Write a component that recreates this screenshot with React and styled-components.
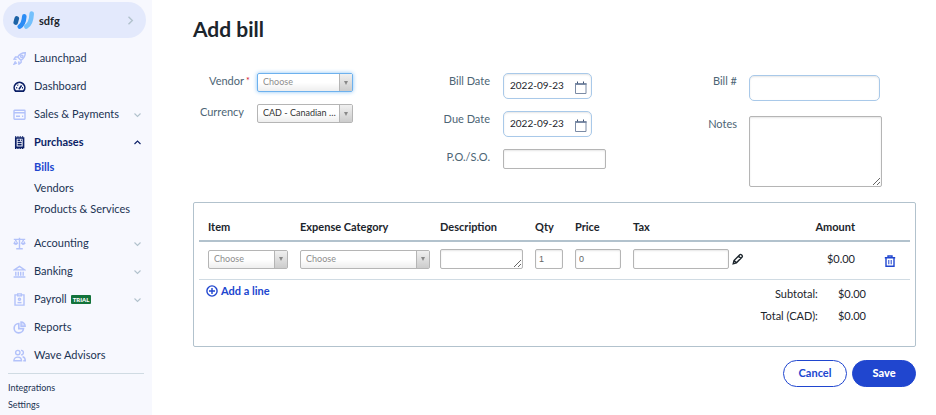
/*
Add bill page: side navigation, bill details form and line items.
*/

import React, { useState } from "react";
import styled, { createGlobalStyle, css, ThemeProvider } from "styled-components";

const theme = {
  colors: {
    blue: "#2046cf",
    navy: "#0b1f66",
    nav: "#1b3353",
    text: "#1c252c",
    label: "#4d6575",
    line: "#b2c2cd",
    icon: "#b3c2fa",
    sidebar: "#f7f8fe",
    pill: "#e3e9fc",
  },
};

const GlobalStyle = createGlobalStyle`
  *,
  *:before,
  *:after {
    box-sizing: border-box;
  }

  body {
    margin: 0;
    background-color: white;
    color: #1c252c;
    font-family: Lato, "Liberation Sans", sans-serif;
    font-size: 11px;
    line-height: 14px;
  }

  button,
  input,
  select,
  textarea {
    font-family: inherit;
    font-size: inherit;
  }
`;

const StyledPage = styled.div`
  display: flex;
  min-height: 100vh;
`;

/* Sidebar */
const StyledSidebar = styled.aside`
  flex: 0 0 152px;
  height: 100vh;
  overflow: hidden;
  padding: 2px 6px 0 3px;
  background-color: ${({ theme }) => theme.colors.sidebar};
`;

const StyledBusiness = styled.button`
  display: flex;
  align-items: center;
  gap: 4px;
  width: 100%;
  height: 36px;
  margin-bottom: 6px;
  padding: 0 12px 0 10px;
  border: none;
  border-radius: 18px;
  background-color: ${({ theme }) => theme.colors.pill};
  color: ${({ theme }) => theme.colors.text};
  font-weight: 700;
  text-align: left;
  cursor: pointer;

  span {
    flex: 1;
  }
`;

const StyledNavList = styled.ul`
  margin: 0;
  padding: 0;
  list-style: none;
`;

const StyledNavLink = styled.a`
  display: flex;
  align-items: center;
  height: 28px;
  padding: 0 4px 0 10px;
  color: ${({ theme, $active }) => ($active ? theme.colors.navy : theme.colors.nav)};
  font-weight: ${({ $active }) => ($active ? 700 : 400)};
  text-decoration: none;

  > svg:first-child {
    margin-right: 8px;
  }

  > svg:last-child:not(:first-child) {
    margin-left: auto;
  }
`;

const StyledSubList = styled.ul`
  margin: 0 0 10px;
  padding: 0 0 0 31px;
  list-style: none;
`;

const StyledSubLink = styled.a`
  display: block;
  height: 21px;
  line-height: 21px;
  color: ${({ theme, $active }) => ($active ? theme.colors.blue : theme.colors.nav)};
  font-weight: ${({ $active }) => ($active ? 700 : 400)};
  text-decoration: none;
  white-space: nowrap;
`;

const StyledBadge = styled.span`
  margin-left: 4px;
  padding: 0 2px;
  border-radius: 1px;
  background-color: #13733b;
  color: white;
  font-size: 6px;
  font-weight: 900;
  line-height: 9px;
`;

const StyledFooterNav = styled.nav`
  display: flex;
  flex-direction: column;
  gap: 3px;
  margin: 4px 2px 0 5px;
  padding-top: 7px;
  border-top: 1px solid #d0dbe3;
  font-size: 9px;

  a {
    color: ${({ theme }) => theme.colors.nav};
    text-decoration: none;
  }
`;

/* Form */
const StyledMain = styled.main`
  flex: 1;
  min-width: 0;
  padding: 15px 20px 0 41px;
`;

const StyledTitle = styled.h1`
  margin: 0 0 30px;
  font-size: 21px;
  font-weight: 700;
  line-height: 28px;
`;

const StyledFields = styled.div`
  display: grid;
  grid-template-columns: repeat(3, minmax(0, 1fr));
  gap: 15px;
`;

const StyledFieldColumn = styled.div`
  display: flex;
  flex-direction: column;
  gap: ${({ $gap }) => $gap}px;
`;

const StyledField = styled.div`
  display: grid;
  grid-template-columns: ${({ $labelWidth }) => $labelWidth || 51}px 1fr;
  column-gap: ${({ $labelWidth }) => 64 - ($labelWidth || 51)}px;
  align-items: start;
`;

const StyledLabel = styled.label`
  justify-self: end;
  position: relative;
  color: ${({ theme }) => theme.colors.label};
  line-height: 15px;
  white-space: nowrap;
`;

const StyledRequired = styled.span`
  position: absolute;
  left: 100%;
  top: 0;
  padding-left: 2px;
  color: #d40f2b;
  font-size: 9px;
`;

const controlStyle = css`
  display: block;
  border: 1px solid #b5b5b5;
  border-radius: 2px;
  background-color: white;
  color: ${({ theme }) => theme.colors.text};
  box-shadow: inset 0 1px 2px rgba(0, 0, 0, 0.1);
  outline: none;
`;

const StyledInput = styled.input`
  ${controlStyle}
  width: ${({ $width }) => $width}px;
  max-width: 100%;
  height: 20px;
  padding: 0 3px;

  ${({ $large }) =>
    $large &&
    css`
      height: 26px;
      margin-top: 2px;
      padding: 0 6px;
      border-color: #a9c9e9;
      border-radius: 5px;
    `}

  ${({ $number }) =>
    $number &&
    css`
      color: #666;
      font-family: "Liberation Sans", sans-serif;
      font-size: 9px;
    `}
`;

const StyledTextarea = styled.textarea`
  ${controlStyle}
  width: ${({ $width }) => $width}px;
  height: ${({ $height }) => $height}px;
  padding: 2px 3px;
  resize: both;
`;

const StyledDateBox = styled.div`
  ${controlStyle}
  display: flex;
  align-items: center;
  width: 89px;
  height: 26px;
  padding: 0 4px 0 6px;
  border-color: #a9c9e9;
  border-radius: 5px;

  input {
    flex: 1;
    min-width: 0;
    padding: 0 0 2px;
    border: none;
    background: none;
    color: inherit;
    font-size: 10px;
    outline: none;
  }

  button {
    display: flex;
    padding: 2px 0 0;
    border: none;
    background: none;
    cursor: pointer;
  }
`;

const StyledSelectBox = styled.div`
  position: relative;
  width: ${({ $width }) => $width}px;
  height: 19px;
  border: 1px solid ${({ $focus }) => ($focus ? "#6db1ee" : "#b5b5b5")};
  border-radius: 2px;
  background: linear-gradient(white 50%, #eee);
  box-shadow: ${({ $focus }) => ($focus ? "0 0 4px #8cc4f5" : "none")};

  select {
    display: block;
    width: 100%;
    height: 100%;
    padding: 0 14px 2px 5px;
    border: none;
    background: none;
    color: ${({ $empty }) => ($empty ? "#8d8d8d" : "#333")};
    font-size: 9px;
    appearance: none;
    outline: none;
    text-overflow: ellipsis;
  }
`;

const StyledSelectArrow = styled.span`
  position: absolute;
  top: 0;
  right: 0;
  display: flex;
  align-items: center;
  justify-content: center;
  width: 13px;
  height: 100%;
  border-left: 1px solid #b5b5b5;
  background: linear-gradient(#f0f0f0, #ccc);
  pointer-events: none;

  &:before {
    content: "";
    border: 2px solid transparent;
    border-top: 4px solid #888;
    border-bottom: none;
  }
`;

/* Line items */
const StyledCard = styled.section`
  margin-top: 15px;
  padding: 12px 5px 19px;
  border: 1px solid ${({ theme }) => theme.colors.line};
  border-radius: 2px;
`;

const StyledTable = styled.table`
  width: 100%;
  table-layout: fixed;
  border-collapse: collapse;
  border-bottom: 1px solid #d0dbe3;

  th {
    height: 26px;
    padding: 0 0 1px;
    border-bottom: 2px solid ${({ theme }) => theme.colors.line};
    text-align: left;
    white-space: nowrap;
  }

  td {
    height: 38px;
    padding: 0 0 2px;
    vertical-align: middle;
  }

  th:first-child,
  td:first-child {
    padding-left: 9px;
  }

  th.amount,
  td.amount {
    text-align: right;
  }
`;

const StyledTaxCell = styled.div`
  display: flex;
  align-items: center;
  gap: 3px;
`;

const StyledIconButton = styled.button`
  display: flex;
  padding: 0;
  border: none;
  background: none;
  color: ${({ theme, $blue }) => ($blue ? theme.colors.blue : theme.colors.text)};
  cursor: pointer;
`;

const StyledRowDelete = styled.div`
  display: flex;
  justify-content: flex-end;
  padding: 4px 14px 0 0;
`;

const StyledCardFooter = styled.div`
  display: flex;
  justify-content: space-between;
  align-items: flex-start;
  padding: 3px 44px 0 7px;
`;

const StyledAddLine = styled.button`
  display: flex;
  align-items: center;
  gap: 3px;
  height: 16px;
  padding: 0;
  border: none;
  background: none;
  color: ${({ theme }) => theme.colors.blue};
  font-weight: 700;
  cursor: pointer;
`;

const StyledTotals = styled.dl`
  display: grid;
  grid-template-columns: auto auto;
  gap: 0 20px;
  margin: 0;
  line-height: 22px;
  text-align: right;

  dd {
    margin: 0;
  }
`;

const StyledActions = styled.div`
  display: flex;
  justify-content: flex-end;
  gap: 5px;
  margin-top: 13px;
`;

const StyledButton = styled.button`
  width: 64px;
  height: 27px;
  padding: 0 0 2px;
  border: 1px solid ${({ theme }) => theme.colors.blue};
  border-radius: 14px;
  background-color: ${({ theme, $primary }) => ($primary ? theme.colors.blue : "white")};
  color: ${({ theme, $primary }) => ($primary ? "white" : theme.colors.blue)};
  font-weight: ${({ $primary }) => ($primary ? 900 : 700)};
  cursor: pointer;
`;

/* Icons */
const StyledIcon = styled.svg`
  flex: none;
  width: ${({ $size }) => $size || 13}px;
  height: ${({ $size }) => $size || 13}px;
  fill: none;
  stroke: currentColor;
  stroke-width: 1.4;
  color: ${({ theme, $tone }) => theme.colors[$tone] || "inherit"};
`;

const iconPaths = {
  launchpad: (
    <>
      <path d="M12.300.8C9 .7 6.600 2 4.700 5L8 8.300C11 6.500 12.300 4 12.300.8zM5 4.800 2.500 5 1 7.200l2.600.2M8.200 8l-.1 2.500L6 12.100l-.3-2.700M2.500 9.200 1 12.200l3-1.300" />
      <circle cx="8.800" cy="4.300" r="1.200" />
    </>
  ),
  dashboard: (
    <>
      <path strokeWidth="1.700" d="M2.600 11.200A5.300 5.300 0 1 1 10.400 11.200z" />
      <path strokeWidth="1.600" d="M5.900 9.400 8.600 5.400" />
      <path d="M3.200 7.800h1M4.500 4.800l.6.6M9 7.800h1" />
    </>
  ),
  sales: (
    <>
      <rect x="1" y="2.200" width="11" height="9" rx=".6" />
      <path d="M1 4.800h11M3 8.300h4M9 8.300h1.200" />
    </>
  ),
  purchases: (
    <>
      <path strokeWidth="1.700" d="M2.800 2v9.300h7.700V2z" />
      <path strokeWidth="1.400" strokeDasharray="1.300 1" d="M2 .9h9.200M2 12.200h9.200" />
      <path d="M4.600 4.200h2.600M4.600 6.500h4M4.600 8.800h4M8 4.200h.8" />
    </>
  ),
  accounting: (
    <>
      <path d="M.8 2.400h11.400M6.500.8v10.700M3.200 11.700h6.600" />
      <path fill="currentColor" strokeWidth=".8" d="M.8 6h4c-.2 2-3.800 2-4 0zM8.200 6h4c-.2 2-3.800 2-4 0z" />
      <path strokeWidth="1" d="M1.200 6 2.800 3l1.600 3M8.600 6l1.600-3 1.600 3" />
    </>
  ),
  banking: (
    <path d="M1.300 4.900 6.500 1.400l5.200 3.500zM.6 12h11.800M2.800 6.700v4M5.300 6.700v4M7.700 6.700v4M10.200 6.700v4" />
  ),
  payroll: (
    <>
      <path d="M4.500 1.900H2v10.200h9V1.900H8.500M4.700.9h3.600v2H4.700z" />
      <circle cx="6.500" cy="6.200" r="1.100" />
      <path d="M4.500 9.600h4" />
    </>
  ),
  reports: (
    <>
      <path strokeWidth="1.600" d="M5.800 2.500A4.700 4.700 0 1 0 10.500 7.600H5.800z" />
      <path fill="currentColor" fillOpacity=".5" d="M8 1V5.200h4.200A4.200 4.200 0 0 0 8 1z" />
    </>
  ),
  advisors: (
    <>
      <circle cx="4.800" cy="3.600" r="2.200" />
      <path d="M.9 11.800c0-4.900 7.600-4.900 7.600 0zM8 1.400c3.200-.4 3.200 4.800 0 4.500M9.600 7.800c1.800.4 2.700 2 2.700 4h-2" />
    </>
  ),
};

const NavIcon = ({ name, dark }) => (
  <StyledIcon viewBox="0 0 13 13" $tone={dark ? "navy" : "icon"} aria-hidden="true">
    {iconPaths[name]}
  </StyledIcon>
);

const Chevron = ({ up }) => (
  <StyledIcon viewBox="0 0 9 9" $size={9} $tone={up ? "navy" : "line"} aria-hidden="true">
    <path strokeWidth="1.100" d={up ? "M1.500 6 4.500 3l3 3" : "M1.500 3.500l3 3 3-3"} />
  </StyledIcon>
);

const Logo = () => (
  <svg width="22" height="20" viewBox="0 0 22 20" fill="none" strokeLinecap="round" aria-hidden="true">
    <path d="M3.800 8.400 2.700 12.600" stroke="#1c62a5" strokeWidth="4.600" />
    <path d="M18.700 3.600C18.400 9.500 17 14.500 13.300 16.600" stroke="#73c0fc" strokeWidth="4.600" />
    <path d="M11.300 6.400C11 11 9.800 14.600 6.700 16.600" stroke="#2b8cf5" strokeWidth="4.600" />
  </svg>
);

const topItems = [
  { name: "Launchpad", icon: "launchpad" },
  { name: "Dashboard", icon: "dashboard", dark: true },
  { name: "Sales & Payments", icon: "sales", expands: true },
  { name: "Purchases", icon: "purchases", dark: true, expands: true, open: true },
];

const bottomItems = [
  { name: "Accounting", icon: "accounting", expands: true },
  { name: "Banking", icon: "banking", expands: true },
  { name: "Payroll", icon: "payroll", expands: true, badge: "TRIAL" },
  { name: "Reports", icon: "reports" },
  { name: "Wave Advisors", icon: "advisors" },
];

const NavItem = ({ item }) => (
  <li>
    <StyledNavLink href="#" $active={item.open}>
      <NavIcon name={item.icon} dark={item.dark} />
      {item.name}
      {item.badge && <StyledBadge>{item.badge}</StyledBadge>}
      {item.expands && <Chevron up={item.open} />}
    </StyledNavLink>
  </li>
);

const Sidebar = () => (
  <StyledSidebar>
    <StyledBusiness type="button">
      <Logo />
      <span>sdfg</span>
      <StyledIcon viewBox="0 0 9 9" $size={9} $tone="line" aria-hidden="true">
        <path d="M3.500.8 7.300 4.500 3.500 8.200" />
      </StyledIcon>
    </StyledBusiness>
    <nav>
      <StyledNavList>
        {topItems.map((item) => (
          <NavItem key={item.name} item={item} />
        ))}
      </StyledNavList>
      <StyledSubList>
        {["Bills", "Vendors", "Products & Services"].map((name) => (
          <li key={name}>
            <StyledSubLink href="#" $active={name === "Bills"}>
              {name}
            </StyledSubLink>
          </li>
        ))}
      </StyledSubList>
      <StyledNavList>
        {bottomItems.map((item) => (
          <NavItem key={item.name} item={item} />
        ))}
      </StyledNavList>
    </nav>
    <StyledFooterNav>
      <a href="#">Integrations</a>
      <a href="#">Settings</a>
    </StyledFooterNav>
  </StyledSidebar>
);

const Select = ({ id, label, options, width, focus, empty }) => (
  <StyledSelectBox $width={width} $focus={focus} $empty={empty}>
    <select id={id} aria-label={label}>
      {options.map((option) => (
        <option key={option}>{option}</option>
      ))}
    </select>
    <StyledSelectArrow />
  </StyledSelectBox>
);

const DateField = ({ id, label }) => {
  const [date, setDate] = useState("2022-09-23");

  return (
    <StyledField>
      <StyledLabel htmlFor={id}>{label}</StyledLabel>
      <StyledDateBox>
        <input id={id} type="text" value={date} onChange={(e) => setDate(e.target.value)} />
        <button type="button" aria-label={`Pick ${label}`}>
          <svg width="13" height="13" viewBox="0 0 13 13" fill="none" stroke="#7b8ba5" aria-hidden="true">
            <path d="M1.500 2.500h10.500v10H1.500z" />
            <path strokeWidth="2" d="M1 3h11.500" />
            <path stroke="#3f5273" d="M3.500.5v2M9.500.5v2" />
          </svg>
        </button>
      </StyledDateBox>
    </StyledField>
  );
};

const LineItems = () => (
  <StyledCard>
    <StyledTable>
      <colgroup>
        <col style={{ width: 101 }} />
        <col style={{ width: 140 }} />
        <col style={{ width: 95 }} />
        <col style={{ width: 40 }} />
        <col style={{ width: 58 }} />
        <col style={{ width: 120 }} />
        <col />
        <col style={{ width: 55 }} />
      </colgroup>
      <thead>
        <tr>
          <th>Item</th>
          <th>Expense Category</th>
          <th>Description</th>
          <th>Qty</th>
          <th>Price</th>
          <th>Tax</th>
          <th className="amount">Amount</th>
          <th aria-label="Actions" />
        </tr>
      </thead>
      <tbody>
        <tr>
          <td>
            <Select label="Item" options={["Choose"]} width={80} empty />
          </td>
          <td>
            <Select label="Expense Category" options={["Choose"]} width={130} empty />
          </td>
          <td>
            <StyledTextarea aria-label="Description" $width={83} $height={20} />
          </td>
          <td>
            <StyledInput aria-label="Qty" defaultValue="1" $width={28} $number />
          </td>
          <td>
            <StyledInput aria-label="Price" defaultValue="0" $width={46} $number />
          </td>
          <td>
            <StyledTaxCell>
              <StyledInput aria-label="Tax" $width={96} />
              <StyledIconButton type="button" aria-label="Edit tax">
                <StyledIcon viewBox="0 0 12 12" $size={12} aria-hidden="true">
                  <path d="M1.200 10.800 2 7.500 7.800 1.700c1-1 3.300 1 2.300 2.300L4.400 9.800zM6.500 3l2.400 2.400M2 7.500l2.400 2.300" />
                </StyledIcon>
              </StyledIconButton>
            </StyledTaxCell>
          </td>
          <td className="amount">$0.00</td>
          <td>
            <StyledRowDelete>
              <StyledIconButton type="button" aria-label="Delete line" $blue>
                <StyledIcon viewBox="0 0 12 12" $size={12} aria-hidden="true">
                  <path d="M.8 2.800h10.400M4 2.600V1h4v1.600M2 3v8.300h8V3" />
                  <path strokeWidth="1" d="M4.800 5v4.300M7.200 5v4.300" />
                </StyledIcon>
              </StyledIconButton>
            </StyledRowDelete>
          </td>
        </tr>
      </tbody>
    </StyledTable>
    <StyledCardFooter>
      <StyledAddLine type="button">
        <StyledIcon viewBox="0 0 12 12" $size={12} aria-hidden="true">
          <circle cx="6" cy="6" r="5.100" />
          <path d="M6 3v6M3 6h6" />
        </StyledIcon>
        Add a line
      </StyledAddLine>
      <StyledTotals>
        <dt>Subtotal:</dt>
        <dd>$0.00</dd>
        <dt>Total (CAD):</dt>
        <dd>$0.00</dd>
      </StyledTotals>
    </StyledCardFooter>
  </StyledCard>
);

const App = () => (
  <ThemeProvider theme={theme}>
    <GlobalStyle />
    <StyledPage>
      <Sidebar />
      <StyledMain>
        <StyledTitle>Add bill</StyledTitle>
        <StyledFields>
          <StyledFieldColumn $gap={12}>
            <StyledField>
              <StyledLabel htmlFor="vendor">
                Vendor
                <StyledRequired>*</StyledRequired>
              </StyledLabel>
              <Select id="vendor" options={["Choose"]} width={96} focus empty />
            </StyledField>
            <StyledField>
              <StyledLabel htmlFor="currency">Currency</StyledLabel>
              <Select id="currency" options={["CAD - Canadian dollar"]} width={96} />
            </StyledField>
          </StyledFieldColumn>
          <StyledFieldColumn $gap={12}>
            <DateField id="bill-date" label="Bill Date" />
            <DateField id="due-date" label="Due Date" />
            <StyledField>
              <StyledLabel htmlFor="po-so">P.O./S.O.</StyledLabel>
              <StyledInput id="po-so" type="text" $width={103} />
            </StyledField>
          </StyledFieldColumn>
          <StyledFieldColumn $gap={15}>
            <StyledField $labelWidth={52}>
              <StyledLabel htmlFor="bill-number">Bill #</StyledLabel>
              <StyledInput id="bill-number" type="text" $width={131} $large />
            </StyledField>
            <StyledField $labelWidth={52}>
              <StyledLabel htmlFor="notes">Notes</StyledLabel>
              <StyledTextarea id="notes" $width={133} $height={71} />
            </StyledField>
          </StyledFieldColumn>
        </StyledFields>
        <LineItems />
        <StyledActions>
          <StyledButton type="button">Cancel</StyledButton>
          <StyledButton type="button" $primary>
            Save
          </StyledButton>
        </StyledActions>
      </StyledMain>
    </StyledPage>
  </ThemeProvider>
);

export default App;
